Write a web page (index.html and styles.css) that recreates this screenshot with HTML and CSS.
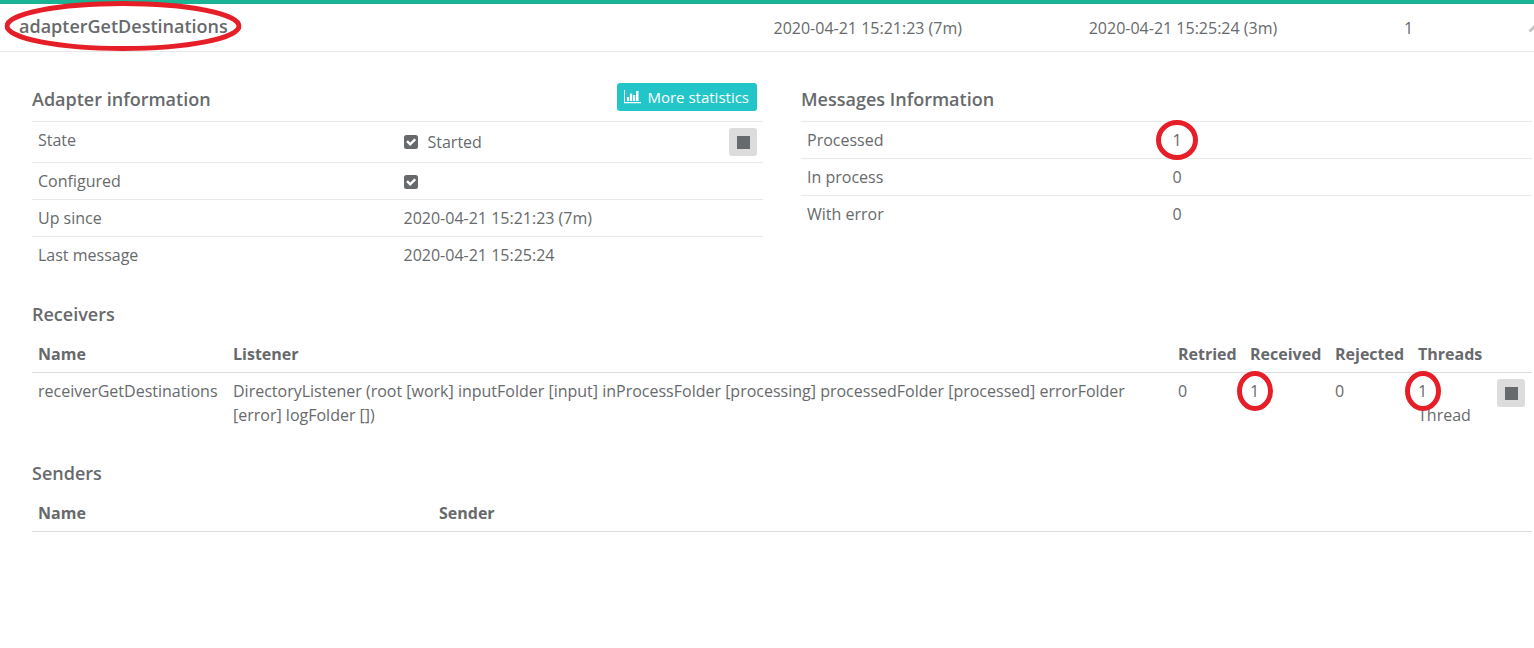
FILE: index.html
```html
<!DOCTYPE html>
<html lang="en">
<head>
<meta charset="utf-8">
<title>Adapter status</title>
<link rel="stylesheet" href="styles.css">
</head>
<body>
<svg class="sprite" aria-hidden="true">
  <symbol id="check" viewBox="0 0 14 14"><path fill="currentColor" fill-rule="evenodd" d="M2.500 0h9A2.500 2.500 0 0 1 14 2.500v9a2.500 2.500 0 0 1-2.500 2.500h-9A2.500 2.500 0 0 1 0 11.500v-9A2.500 2.500 0 0 1 2.500 0zM6.200 11l5.900-5.900-1.700-1.700-4.200 4.200-2.300-2.300-1.700 1.700z"/></symbol>
</svg>
<main class="adapter">
  <header class="bar">
    <h1 class="title"><span class="marked">adapterGetDestinations<svg class="mark mark-title" viewBox="0 0 237 50"><ellipse cx="118.500" cy="25" rx="116" ry="22.500"/></svg></span></h1>
    <span>2020-04-21 15:21:23 (7m)</span>
    <span>2020-04-21 15:25:24 (3m)</span>
    <span>1</span>
    <button class="collapse" aria-label="Collapse"><svg width="16" height="11" viewBox="0 0 16 11"><path d="M1.500 9.500L8 3l6.500 6.500" fill="none" stroke="currentColor" stroke-width="3"/></svg></button>
  </header>
  <div class="content">
    <div class="columns">
      <section>
        <div class="heading-row">
          <h2>Adapter information</h2>
          <button class="stats"><svg width="17" height="14" viewBox="0 0 17 14" fill="currentColor"><path d="M0 0h1v12h16v1.300H0zM3 7h2.200v4H3zM6 3.500h2.200V11H6zM9 5h2.200v6H9zM12 1h2.500v10H12z"/></svg>More statistics</button>
        </div>
        <table class="info">
          <tbody>
          <tr><th scope="row">State</th><td><div class="state"><svg class="check"><use href="#check"/></svg>Started<button class="stop" aria-label="Stop adapter"></button></div></td></tr>
          <tr><th scope="row">Configured</th><td><svg class="check" role="img" aria-label="Yes"><use href="#check"/></svg></td></tr>
          <tr><th scope="row">Up since</th><td>2020-04-21 15:21:23 (7m)</td></tr>
          <tr><th scope="row">Last message</th><td>2020-04-21 15:25:24</td></tr>
          </tbody>
        </table>
      </section>
      <section>
        <div class="heading-row"><h2>Messages Information</h2></div>
        <table class="info">
          <tbody>
          <tr><th scope="row">Processed</th><td><span class="marked">1<svg class="mark mark-round" viewBox="0 0 42 40"><ellipse cx="21" cy="20" rx="18.500" ry="17.500"/></svg></span></td></tr>
          <tr><th scope="row">In process</th><td>0</td></tr>
          <tr><th scope="row">With error</th><td>0</td></tr>
          </tbody>
        </table>
      </section>
    </div>
    <section class="section">
      <h2>Receivers</h2>
      <table class="list">
        <colgroup><col class="c-name"><col><col class="c-retried"><col class="c-received"><col class="c-rejected"><col class="c-threads"><col class="c-action"></colgroup>
        <thead><tr><th>Name</th><th>Listener</th><th>Retried</th><th>Received</th><th>Rejected</th><th>Threads</th><td></td></tr></thead>
        <tbody><tr>
          <td>receiverGetDestinations</td>
          <td>DirectoryListener (root [work] inputFolder [input] inProcessFolder [processing] processedFolder [processed] errorFolder [error] logFolder [])</td>
          <td>0</td>
          <td><span class="marked">1<svg class="mark mark-tall" viewBox="0 0 36 40"><ellipse cx="18" cy="20" rx="15.500" ry="17.500"/></svg></span></td>
          <td>0</td>
          <td><span class="marked">1<svg class="mark mark-tall" viewBox="0 0 36 40"><ellipse cx="18" cy="20" rx="15.500" ry="17.500"/></svg></span><br>Thread</td>
          <td><button class="stop" aria-label="Stop receiver"></button></td>
        </tr></tbody>
      </table>
    </section>
    <section class="section">
      <h2>Senders</h2>
      <table class="list">
        <colgroup><col class="c-sender"><col></colgroup>
        <thead><tr><th>Name</th><th>Sender</th></tr></thead>
      </table>
    </section>
  </div>
</main>
</body>
</html>
```
FILE: styles.css
```css
* { box-sizing: border-box; }
body {
  margin: 0;
  background: #fff;
  color: #676a6c;
  font: 16px/24px "Open Sans", "Noto Sans", sans-serif;
}
button { border: 0; border-radius: 3px; font: inherit; cursor: pointer; }
h1, h2 { margin: 0; font-size: 18px; line-height: 24px; font-weight: 600; }
h2 { margin-bottom: 10px; }
.sprite { position: absolute; width: 0; height: 0; }

.adapter { overflow-x: clip; }
.bar {
  display: grid;
  grid-template-columns: 754fr 315fr 315fr 124fr 6px;
  align-items: center;
  padding: 10px 0 10px 19px;
  border-top: 4px solid #1ab394;
  border-bottom: 1px solid #e7eaec;
}
.title { padding-bottom: 3px; }
.collapse { width: 16px; padding: 0; background: none; color: #c4c4c4; line-height: 0; }

.content { padding: 31px 2px 0 32px; }
.columns { display: grid; grid-template-columns: 1fr 1fr; gap: 38px; margin-bottom: 29px; }
.section { margin-bottom: 28px; }
.heading-row { display: flex; align-items: flex-start; justify-content: space-between; padding: 0 6px 0 0; }
.heading-row h2 { margin: 4px 0 10px; }
.stats {
  display: flex;
  align-items: center;
  gap: 6px;
  height: 28px;
  padding: 0 8px 0 7px;
  background: #23c6c8;
  color: #fff;
  font-size: 15px;
}

table { width: 100%; border-collapse: separate; border-spacing: 0; table-layout: fixed; }
th, td { padding: 6px; text-align: left; vertical-align: top; }
.info th { font-weight: 400; }
.info th, .info td { border-top: 1px solid #e7eaec; }
.list thead th, .list thead td { border-bottom: 1px solid #ddd; }
.list th { font-weight: 700; }
.state { display: flex; align-items: center; gap: 10px; }
.check { display: inline-block; width: 14px; height: 14px; vertical-align: -2px; }
.stop {
  display: grid;
  place-items: center;
  width: 28px;
  height: 28px;
  padding: 0;
  background: #dcdcdc;
}
.stop::before { content: ""; width: 13px; height: 13px; background: #676a6c; }
.state .stop { margin-left: auto; }

.c-name { width: 195px; }
.c-retried { width: 72px; }
.c-received { width: 85px; }
.c-rejected { width: 83px; }
.c-threads { width: 79px; }
.c-action { width: 41px; }
.c-sender { width: 401px; }

.marked { position: relative; }
.mark {
  position: absolute;
  top: 50%;
  left: 50%;
  transform: translate(-50%, -50%);
  fill: none;
  stroke: #e61e28;
  stroke-width: 5;
  pointer-events: none;
}
.mark-title { width: 237px; height: 50px; }
.mark-round { width: 42px; height: 40px; }
.mark-tall { width: 36px; height: 40px; }
```
